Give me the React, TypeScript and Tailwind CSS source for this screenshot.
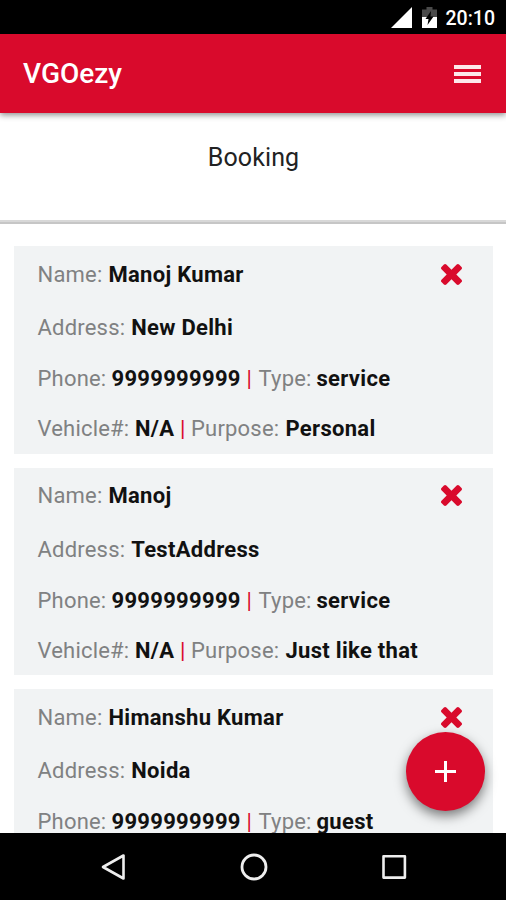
const bookings = [
  { id: 1, name: 'Manoj Kumar', address: 'New Delhi', phone: '9999999999', type: 'service', vehicle: 'N/A', purpose: 'Personal' },
  { id: 2, name: 'Manoj', address: 'TestAddress', phone: '9999999999', type: 'service', vehicle: 'N/A', purpose: 'Just like that' },
  { id: 3, name: 'Himanshu Kumar', address: 'Noida', phone: '9999999999', type: 'guest' },
]

function StatusBar() {
  return (
    <div className="flex h-[34px] shrink-0 items-center justify-end bg-black pt-[3px] pr-[11px] text-white">
      <svg className="mr-2.5 mb-0.5 h-[21px] w-[21px]" viewBox="0 0 21 21">
        <path d="M21 0v21H0z" fill="#fff" />
      </svg>
      <svg className="mr-[9px] mb-[3px] h-[21px] w-[15px]" viewBox="0 0 15 21">
        <path d="M4.5 0h6v2.5H15V10H0V2.5h4.500z" fill="#4a4a4a" />
        <path d="M0 10h15v11H0z" fill="#fff" />
        <path d="M9 4 3.500 12h3L5.500 18l6-8.500h-3z" fill="#000" />
      </svg>
      <span className="text-[19.5px] leading-none font-medium">20:10</span>
    </div>
  )
}

function Header() {
  return (
    <header className="relative z-10 flex h-[79px] shrink-0 items-center justify-between bg-[#d90a2c] pr-[25px] pl-[23px] shadow-[0_2px_6px_rgba(0,0,0,0.45)]">
      <h1 className="text-[28px] leading-none font-medium text-white">VGOezy</h1>
      <button className="flex w-[27px] flex-col gap-[3px]">
        <span className="h-1 w-full bg-[#fde8ea]" />
        <span className="h-1 w-full bg-[#fde8ea]" />
        <span className="h-1 w-full bg-[#fde8ea]" />
      </button>
    </header>
  )
}

function RemoveIcon() {
  return (
    <svg className="h-[21px] w-[21px]" viewBox="110 366 1188 1188" fill="#d90a2c">
      <path d="M1298 1322q0 40-28 68l-136 136q-28 28-68 28t-68-28l-294-294-294 294q-28 28-68 28t-68-28l-136-136q-28-28-28-68t28-68l294-294-294-294q-28-28-28-68t28-68l136-136q28-28 68-28t68 28l294 294 294-294q28-28 68-28t68 28l136 136q28 28 28 68t-28 68l-294 294 294 294q28 28 28 68z" />
    </svg>
  )
}

function Value({ children }: { children: any }) {
  return <b className="font-bold tracking-[0.3px] text-[#111]">{children}</b>
}

function BookingCard({ booking }: { booking: any }) {
  return (
    <div className="shrink-0 bg-[#f1f3f4] pl-[23.5px] text-[22px] tracking-[0.2px] whitespace-nowrap text-[#808182]">
      <div className="flex h-14 items-center justify-between pr-[31px]">
        <p className="flex gap-[6px]">Name: <Value>{booking.name}</Value></p>
        <RemoveIcon />
      </div>
      <p className="flex h-[51px] items-center gap-[6px]">Address: <Value>{booking.address}</Value></p>
      <p className="flex h-[51px] items-center">
        <span className="w-[74px]">Phone:</span>
        <span className="w-[135px]"><Value>{booking.phone}</Value></span>
        <span className="w-[12px] text-[#d90a2c]">|</span>
        <span className="w-[58px]">Type:</span>
        <Value>{booking.type}</Value>
      </p>
      {booking.vehicle && (
        <p className="flex h-[49.5px] items-center">
          <span className="w-[97.5px]">Vehicle#:</span>
          <span className="w-[45px]"><Value>{booking.vehicle}</Value></span>
          <span className="w-[11px] text-[#d90a2c]">|</span>
          <span className="w-[94.5px]">Purpose:</span>
          <Value>{booking.purpose}</Value>
        </p>
      )}
    </div>
  )
}

function NavBar() {
  return (
    <nav className="relative z-10 flex h-[67px] shrink-0 items-center justify-between bg-black pr-[98px] pl-[100px]">
      <svg className="h-8 w-[28px]" viewBox="0 0 28 32" fill="none" stroke="#eee" strokeWidth="2.600" strokeLinejoin="round">
        <path d="M23.500 4.500v23L3 16z" />
      </svg>
      <svg className="h-8 w-8" viewBox="0 0 32 32" fill="none" stroke="#eee" strokeWidth="2.800">
        <circle cx="16" cy="16" r="12" />
      </svg>
      <svg className="h-8 w-[28px]" viewBox="0 0 28 32" fill="none" stroke="#eee" strokeWidth="2.600" strokeLinejoin="round">
        <path d="M3.500 5.200h21.400v21.400H3.500z" />
      </svg>
    </nav>
  )
}

export default function App() {
  return (
    <div className="flex h-[900px] w-[506px] flex-col overflow-hidden bg-white font-['Roboto',sans-serif]">
      <StatusBar />
      <Header />
      <main className="relative min-h-0 flex-1">
        <div className="h-[107px] pt-[27px] text-center text-[25px] tracking-[0.1px] text-[#222]">
          <h2 className="pl-px leading-9">Booking</h2>
        </div>
        <div className="h-[4px] border-t-2 border-b-2 border-t-[#d8d8d8] border-b-[#c6c6c6]" />
        <div className="flex flex-col gap-[14px] pt-[22px] pr-[13.5px] pl-[14px]">
          {bookings.map((b) => (
            <BookingCard key={b.id} booking={b} />
          ))}
        </div>
        {/* floating add button */}
        <button className="absolute right-[21.500px] bottom-[22.5px] flex h-[79px] w-[79px] items-center justify-center rounded-full bg-[#d90a2c] shadow-[0_5px_12px_rgba(0,0,0,0.5)]">
          <svg className="h-[21px] w-[21px]" viewBox="0 0 21 21" stroke="#fff" strokeWidth="3">
            <path d="M10.500 0v21M0 10.500h21" />
          </svg>
        </button>
      </main>
      <NavBar />
    </div>
  )
}
